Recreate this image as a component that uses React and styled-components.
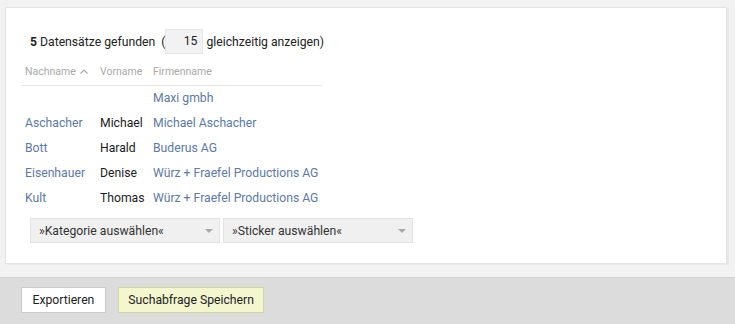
import React from 'react';
import styled, { createGlobalStyle } from 'styled-components';

const GlobalStyle = createGlobalStyle`
  html, body {
    margin: 0;
    padding: 0;
    background: #f2f2f2;
    font-family: Roboto, "Liberation Sans", Arial, sans-serif;
    font-size: 12.2px;
    color: #222;
  }
`;

const Page = styled.div`
  display: flex;
  flex-direction: column;
  min-height: 324px;
`;

const Main = styled.div`
  padding: 7px 8px 13px 5px;
`;

const Card = styled.section`
  background: #fff;
  border: 1px solid #e3e3e3;
  box-shadow: 2px 1px 0 #e8e8e8;
  box-sizing: border-box;
  height: 257px;
  padding: 20px 0 0 15px;
`;

const Summary = styled.div`
  display: flex;
  align-items: center;
  height: 25px;
  padding: 1px 0 0 9px;
  white-space: pre;
  color: #222;

  b {
    font-weight: 700;
  }
`;

const CountInput = styled.div`
  width: 38px;
  height: 25px;
  box-sizing: border-box;
  margin: -1px 3px 0 0;
  background: #f2f2f2;
  border: 1px solid #e6e6e6;
  display: flex;
  align-items: center;
  justify-content: flex-end;
  padding-right: 5px;
  color: #222;
`;

const Table = styled.table`
  margin-top: 7px;
  border-collapse: collapse;
  table-layout: fixed;
  width: 301px;
`;

const HeadCell = styled.th`
  box-sizing: border-box;
  width: ${p => p.$w}px;
  text-align: left;
  font-weight: 400;
  font-size: 10.5px;
  line-height: 14px;
  color: #a9a9a9;
  padding: 4px 4px 6px;
  border-bottom: 1px solid #e6e6e6;
  white-space: nowrap;

  svg {
    margin-left: 4px;
    vertical-align: 1px;
  }
`;

const Cell = styled.td`
  height: 25px;
  padding: 0 4px;
  line-height: 25px;
  white-space: nowrap;
  color: ${p => (p.$link ? '#5d79a6' : '#1c1c24')};
`;

const Filters = styled.div`
  display: flex;
  gap: 3px;
  margin: 7px 0 0 9px;
`;

const Select = styled.div`
  width: 190px;
  height: 25px;
  box-sizing: border-box;
  background: #f0f0f0;
  border: 1px solid #e2e2e2;
  display: flex;
  align-items: center;
  justify-content: space-between;
  padding: 0 6px 0 8px;
  color: #333;
`;

const Arrow = styled.span`
  width: 0;
  height: 0;
  border-left: 4px solid transparent;
  border-right: 4px solid transparent;
  border-top: 4px solid #a8a8a8;
`;

const Footer = styled.footer`
  flex: 1;
  background: #dcdcdc;
  border-top: 1px solid #d0d0d0;
  display: flex;
  align-items: flex-start;
  gap: 12px;
  padding: 9px 0 0 21px;
`;

const Button = styled.button`
  height: 26px;
  box-sizing: border-box;
  padding: 0 ${p => (p.$primary ? 9.5 : 10.5)}px;
  font-family: inherit;
  font-size: 12.2px;
  color: #222;
  background: ${p => (p.$primary ? '#f4f6d0' : '#fff')};
  border: 1px solid ${p => (p.$primary ? '#d2d5a8' : '#cbcbcb')};
  cursor: pointer;
`;

const rows = [
  { last: '', first: '', company: 'Maxi gmbh' },
  { last: 'Aschacher', first: 'Michael', company: 'Michael Aschacher' },
  { last: 'Bott', first: 'Harald', company: 'Buderus AG' },
  { last: 'Eisenhauer', first: 'Denise', company: 'Würz + Fraefel Productions AG' },
  { last: 'Kult', first: 'Thomas', company: 'Würz + Fraefel Productions AG' },
];

export default function App() {
  return (
    <Page>
      <GlobalStyle />
      <Main>
        <Card>
          <Summary>
            <b>5</b> Datensätze gefunden{'  '}(
            <CountInput>15</CountInput>
            gleichzeitig anzeigen)
          </Summary>

          <Table>
            <thead>
              <tr>
                <HeadCell $w={75}>
                  Nachname
                  <svg width="8" height="5" viewBox="0 0 8 5">
                    <polyline points="0.5,4.5 4,1 7.5,4.5" fill="none" stroke="#a9a9a9" strokeWidth="1.2" />
                  </svg>
                </HeadCell>
                <HeadCell $w={53}>Vorname</HeadCell>
                <HeadCell $w={173}>Firmenname</HeadCell>
              </tr>
            </thead>
            <tbody>
              {rows.map((r, i) => (
                <tr key={i}>
                  <Cell $link>{r.last}</Cell>
                  <Cell>{r.first}</Cell>
                  <Cell $link>{r.company}</Cell>
                </tr>
              ))}
            </tbody>
          </Table>

          <Filters>
            <Select>»Kategorie auswählen«<Arrow /></Select>
            <Select>»Sticker auswählen«<Arrow /></Select>
          </Filters>
        </Card>
      </Main>
      <Footer>
        <Button>Exportieren</Button>
        <Button $primary>Suchabfrage Speichern</Button>
      </Footer>
    </Page>
  );
}
